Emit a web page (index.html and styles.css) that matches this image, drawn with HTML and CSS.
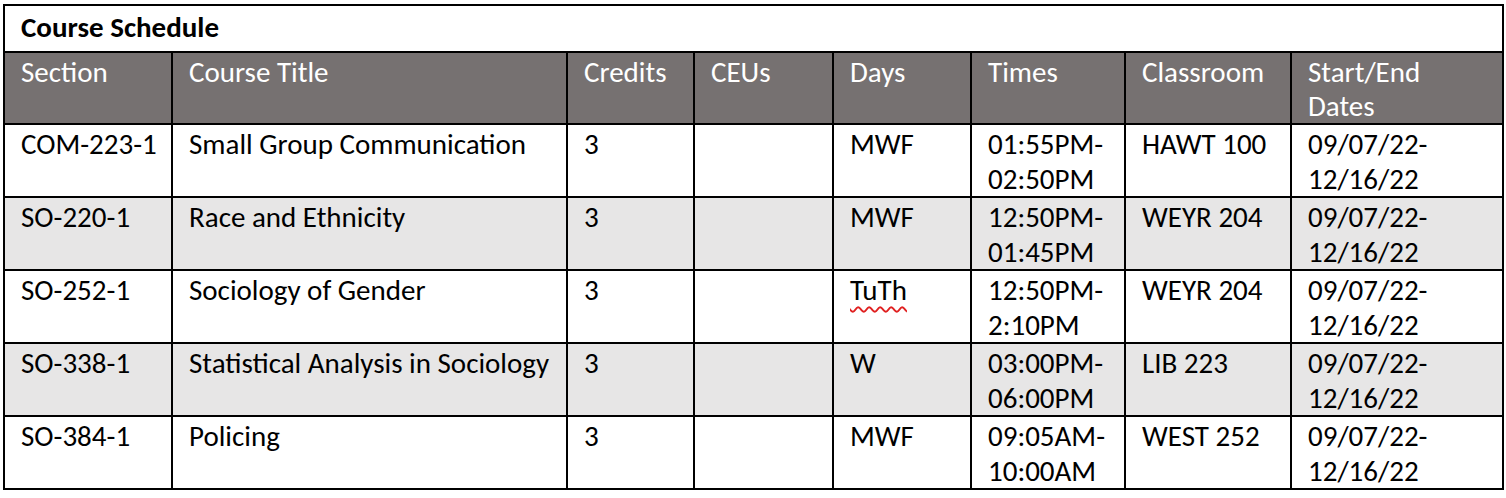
FILE: index.html
```html
<!DOCTYPE html>
<html>
<head>
<meta charset="utf-8">
<link rel="stylesheet" href="styles.css">
</head>
<body>
<table class="schedule">
  <colgroup>
    <col class="c-section"><col class="c-title"><col class="c-credits"><col class="c-ceus"><col class="c-days"><col class="c-times"><col class="c-room"><col class="c-dates">
  </colgroup>
  <thead>
    <tr class="caption-row"><th colspan="8" class="caption">Course Schedule</th></tr>
    <tr class="head">
      <th>Section</th><th>Course Title</th><th>Credits</th><th>CEUs</th><th>Days</th><th>Times</th><th>Classroom</th><th>Start/End<br>Dates</th>
    </tr>
  </thead>
  <tbody>
    <tr>
      <td>COM-223-1</td><td>Small Group Communication</td><td>3</td><td></td><td>MWF</td><td>01:55PM-<br>02:50PM</td><td>HAWT 100</td><td>09/07/22-<br>12/16/22</td>
    </tr>
    <tr class="alt">
      <td>SO-220-1</td><td>Race and Ethnicity</td><td>3</td><td></td><td>MWF</td><td>12:50PM-<br>01:45PM</td><td>WEYR 204</td><td>09/07/22-<br>12/16/22</td>
    </tr>
    <tr>
      <td>SO-252-1</td><td>Sociology of Gender</td><td>3</td><td></td><td><span class="spell">TuTh</span></td><td>12:50PM-<br>2:10PM</td><td>WEYR 204</td><td>09/07/22-<br>12/16/22</td>
    </tr>
    <tr class="alt">
      <td>SO-338-1</td><td>Statistical Analysis in Sociology</td><td>3</td><td></td><td>W</td><td>03:00PM-<br>06:00PM</td><td>LIB 223</td><td>09/07/22-<br>12/16/22</td>
    </tr>
    <tr>
      <td>SO-384-1</td><td>Policing</td><td>3</td><td></td><td>MWF</td><td>09:05AM-<br>10:00AM</td><td>WEST 252</td><td>09/07/22-<br>12/16/22</td>
    </tr>
  </tbody>
</table>
</body>
</html>
```
FILE: styles.css
```css
html, body {
  margin: 0;
  padding: 0;
  background: #ffffff;
}
body {
  padding: 4px 0 0 3px;
  font-family: Carlito, Lato, "Liberation Sans", sans-serif;
}
.schedule {
  border-collapse: collapse;
  table-layout: fixed;
  width: 1499px;
  font-size: 29px;
  color: #000;
}
.c-section { width: 168px; }
.c-title { width: 395px; }
.c-credits { width: 127px; }
.c-ceus { width: 139px; }
.c-days { width: 138px; }
.c-times { width: 154px; }
.c-room { width: 166px; }
.c-dates { width: 212px; }

.schedule th,
.schedule td {
  border: 2px solid #000;
  padding: 2px 4px 0 16px;
  vertical-align: top;
  text-align: left;
  line-height: 34.5px;
  font-weight: normal;
  white-space: nowrap;
  overflow: hidden;
}
.schedule td { height: 69px; }
.caption-row th.caption {
  font-weight: bold;
  font-size: 29px;
  height: 45px;
  padding: 0 4px 0 16px;
  line-height: 42px;
}
.head th {
  background: #767171;
  color: #ffffff;
  height: 68px;
  line-height: 34px;
}
.alt td { background: #e7e6e6; }
.spell {
  text-decoration: underline wavy #e02020;
  text-decoration-thickness: 1.5px;
  text-underline-offset: 6px;
}
```
